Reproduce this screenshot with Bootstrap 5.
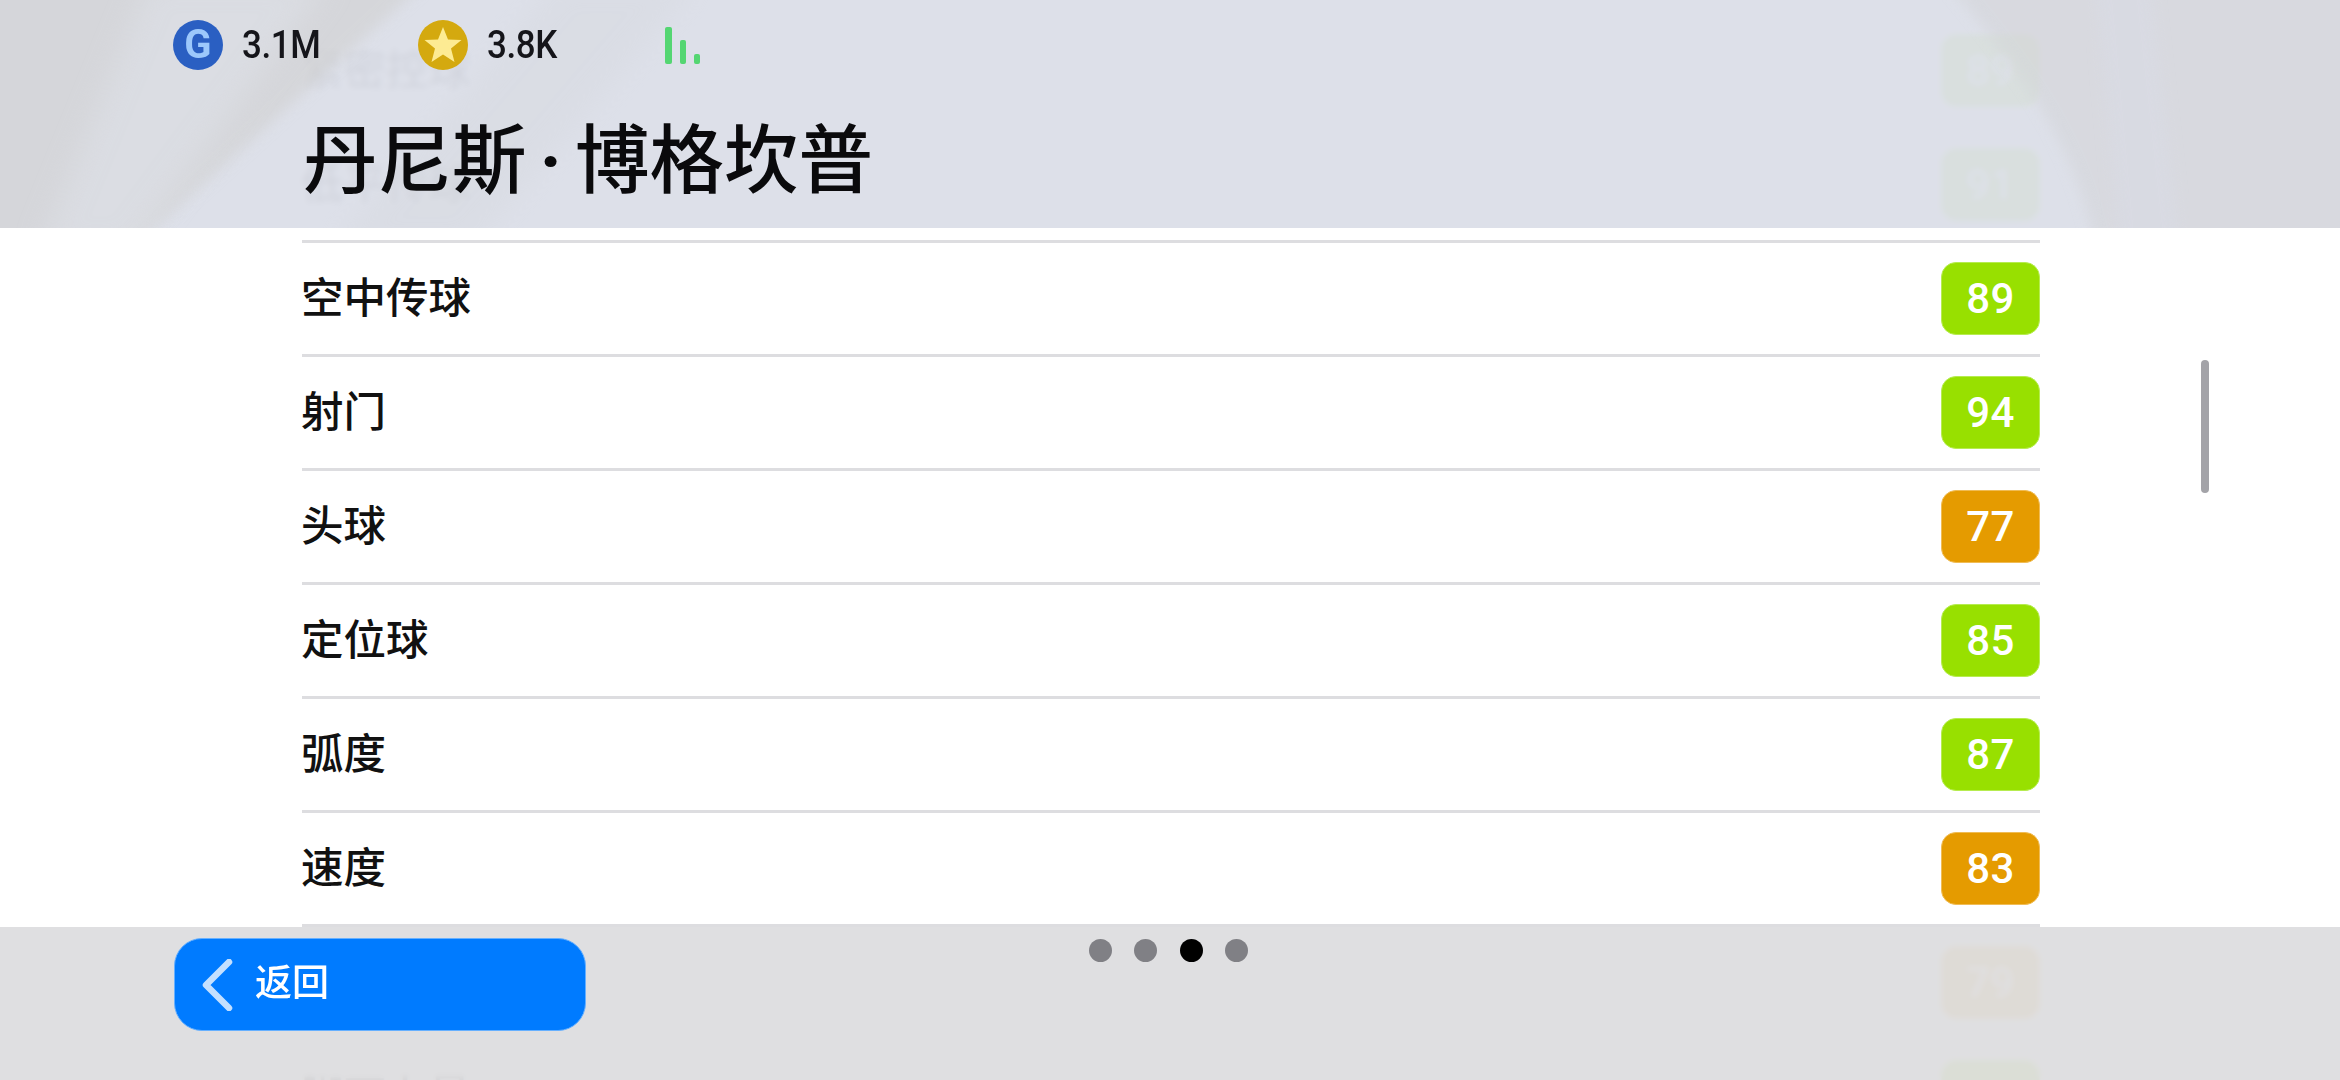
<!DOCTYPE html>
<html lang="zh-CN">
<head>
<meta charset="utf-8">
<title>丹尼斯·博格坎普</title>
<link href="https://cdn.jsdelivr.net/npm/bootstrap@5.3.0/dist/css/bootstrap.min.css" rel="stylesheet">
<style>
html,body{height:100%;overflow:hidden;background:#fff;}
body{font-family:"Noto Sans CJK SC","Noto Sans",sans-serif;color:#0c0c0e;}
.stage{width:2340px;height:1080px;overflow:hidden;}
.attr-list{padding:12px 0 0 302px;width:2040px;}
.attr-line{height:114px;border-top:3px solid #dddde0;}
.attr-name{font-size:42.500px;font-weight:500;line-height:1;color:#111;margin:0 0 7px -1px;}
.attr-chip{width:99px;height:73px;border-radius:15px;font-family:Roboto,sans-serif;font-weight:500;font-size:42px;letter-spacing:.5px;color:#fff;}
.chip-green{background:#98e000;border:1px solid #b6ec50;}
.chip-orange{background:#e59b00;border:1px solid #f0bc55;}
.top-bar{height:228px;z-index:2;background:rgba(219,223,232,.955);backdrop-filter:blur(3px);padding:20px 0 0 173px;}
.decor{top:0;left:0;z-index:-1;}
.stat-a{width:245px;}
.stat-b{width:247px;}
.stat-num{display:inline-block;font-family:Roboto,sans-serif;font-weight:500;font-size:38px;line-height:50px;letter-spacing:-.4px;color:#15151a;margin-left:19px;transform:scaleX(.92);transform-origin:left center;}
.coin-g{width:50px;height:50px;background:#2a5fc2;color:#9cc8fb;font-family:Roboto,sans-serif;font-weight:700;font-size:40px;line-height:1;}
.player-title{font-size:74.500px;font-weight:500;line-height:78px;margin:46px 0 0 130px;color:#0a0a0c;}
.title-dot{font-family:Roboto,sans-serif;font-weight:700;margin:0 13px;}
.thumb{left:2201px;top:360px;width:8px;height:133px;border-radius:4px;background:#a3a3a8;z-index:1;}
.bottom-bar{height:153px;z-index:2;background:rgba(222,222,224,.955);backdrop-filter:blur(3px);padding:11px 0 0 174px;}
.back-btn{width:412px;height:93px;border-radius:28px;background:#007bff;border:1px solid #66b0ff;color:#fff;font-size:37px;font-weight:500;line-height:1;padding:0 0 0 27px;}
.back-btn:hover{background:#007bff;color:#fff;border-color:#66b0ff;}
.back-label{margin-left:21px;margin-bottom:9px;}
.pager{margin:1px 0 0 503px;gap:22.300px;}
.pager-dot{width:23px;height:23px;background:#808085;}
.pager-dot.is-on{background:#000;}
</style>
</head>
<body>
<div class="stage position-relative">

  <div class="attr-list">
    <div class="attr-line d-flex align-items-center justify-content-between"><span class="attr-name">紧密控球</span><span class="attr-chip chip-green d-flex align-items-center justify-content-center">89</span></div>
    <div class="attr-line d-flex align-items-center justify-content-between"><span class="attr-name">低平传球</span><span class="attr-chip chip-green d-flex align-items-center justify-content-center">91</span></div>
    <div class="attr-line d-flex align-items-center justify-content-between"><span class="attr-name">空中传球</span><span class="attr-chip chip-green d-flex align-items-center justify-content-center">89</span></div>
    <div class="attr-line d-flex align-items-center justify-content-between"><span class="attr-name">射门</span><span class="attr-chip chip-green d-flex align-items-center justify-content-center">94</span></div>
    <div class="attr-line d-flex align-items-center justify-content-between"><span class="attr-name">头球</span><span class="attr-chip chip-orange d-flex align-items-center justify-content-center">77</span></div>
    <div class="attr-line d-flex align-items-center justify-content-between"><span class="attr-name">定位球</span><span class="attr-chip chip-green d-flex align-items-center justify-content-center">85</span></div>
    <div class="attr-line d-flex align-items-center justify-content-between"><span class="attr-name">弧度</span><span class="attr-chip chip-green d-flex align-items-center justify-content-center">87</span></div>
    <div class="attr-line d-flex align-items-center justify-content-between"><span class="attr-name">速度</span><span class="attr-chip chip-orange d-flex align-items-center justify-content-center">83</span></div>
    <div class="attr-line d-flex align-items-center justify-content-between"><span class="attr-name">加速度</span><span class="attr-chip chip-orange d-flex align-items-center justify-content-center">79</span></div>
    <div class="attr-line d-flex align-items-center justify-content-between"><span class="attr-name">脚下力量</span><span class="attr-chip chip-green d-flex align-items-center justify-content-center">88</span></div>
  </div>

  <div class="thumb position-absolute"></div>

  <header class="top-bar position-absolute top-0 start-0 w-100">
    <svg class="decor position-absolute" width="2340" height="228" viewBox="0 0 2340 228" aria-hidden="true">
      <defs>
        <filter id="soft" x="-10%" y="-10%" width="120%" height="120%"><feGaussianBlur stdDeviation="7"/></filter>
        <filter id="softer" x="-10%" y="-10%" width="120%" height="120%"><feGaussianBlur stdDeviation="14"/></filter>
        <clipPath id="barclip"><rect width="2340" height="228"/></clipPath>
      </defs>
      <g clip-path="url(#barclip)">
        <polygon points="-40,-40 450,-40 110,270 -40,270" fill="#d0d0d0" opacity=".6" filter="url(#soft)"/>
        <polygon points="150,-20 330,-20 130,250 40,250" fill="#dfe2e9" opacity=".55" filter="url(#softer)"/>
        <polygon points="560,-20 700,-20 470,250 330,250" fill="#d3d5da" opacity=".3" filter="url(#softer)"/>
        <path d="M1945,-20 C2020,70 2075,140 2096,250 L2380,250 L2380,-20 Z" fill="#d2d3d6" opacity=".5" filter="url(#soft)"/>
        <polygon points="2095,-20 2150,-20 2180,250 2120,250" fill="#d9dce6" opacity=".5" filter="url(#soft)"/>
      </g>
    </svg>
    <div class="d-flex align-items-center">
      <div class="stat-a d-flex align-items-center">
        <span class="coin-g rounded-circle d-flex align-items-center justify-content-center">G</span>
        <span class="stat-num">3.1M</span>
      </div>
      <div class="stat-b d-flex align-items-center">
        <svg width="50" height="50" viewBox="0 0 50 50" aria-hidden="true">
          <circle cx="25" cy="25" r="25" fill="#d4a90f"/>
          <polygon points="25,7 30,19.500 43.500,20 33,28.500 36.500,42 25,34.500 13.500,42 17,28.500 6.500,20 20,19.500" fill="#fdeb93"/>
        </svg>
        <span class="stat-num">3.8K</span>
      </div>
      <svg width="36" height="40" viewBox="0 0 36 40" aria-hidden="true">
        <rect x="0" y="2" width="7" height="37" rx="2" fill="#54d672"/>
        <rect x="15" y="15" width="6" height="24" rx="2" fill="#54d672"/>
        <rect x="29" y="29" width="6" height="10" rx="2" fill="#54d672"/>
      </svg>
    </div>
    <h1 class="player-title">丹尼斯<span class="title-dot">·</span>博格坎普</h1>
  </header>

  <footer class="bottom-bar position-absolute bottom-0 start-0 w-100 d-flex align-items-start">
    <button type="button" class="btn back-btn d-flex align-items-center">
      <svg width="32" height="52" viewBox="0 0 32 52" aria-hidden="true">
        <path d="M27,3 L4,26 L27,49" fill="none" stroke="#c4e0ff" stroke-width="6.500" stroke-linecap="round" stroke-linejoin="round"/>
      </svg>
      <span class="back-label">返回</span>
    </button>
    <div class="pager d-flex">
      <span class="pager-dot rounded-circle"></span>
      <span class="pager-dot rounded-circle"></span>
      <span class="pager-dot is-on rounded-circle"></span>
      <span class="pager-dot rounded-circle"></span>
    </div>
  </footer>
</div>
<script src="https://cdn.jsdelivr.net/npm/bootstrap@5.3.0/dist/js/bootstrap.bundle.min.js"></script>
</body>
</html>
